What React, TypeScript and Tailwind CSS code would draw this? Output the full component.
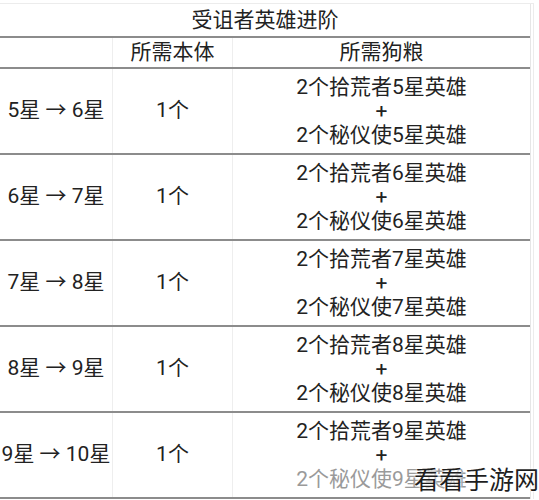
import React from 'react';

interface Row {
  from: number;
  to: number;
}

const rows: Row[] = [
  { from: 5, to: 6 },
  { from: 6, to: 7 },
  { from: 7, to: 8 },
  { from: 8, to: 9 },
  { from: 9, to: 10 },
];

const font = { fontFamily: '"Roboto", "Noto Sans CJK SC", sans-serif' };

const App: React.FC = () => {
  return (
    <div className="relative w-[539px] h-[500px] overflow-hidden bg-white text-[#222] text-[21px]" style={font}>
      <div className="mt-[3px] w-[534px] border-t border-r border-[#ececec]">
        <div className="w-[531px] border-r border-[#e6e6e6]">
          {/* title */}
          <div className="h-[34px] flex items-center justify-center border-b-2 border-[#8c8c8c] leading-none">
            受诅者英雄进阶
          </div>
          {/* header */}
          <div className="grid grid-cols-[113px_120px_1fr] h-[31px] border-b-2 border-[#8c8c8c] leading-none">
            <div className="border-r border-[#eeeeee]" />
            <div className="flex items-center justify-center border-r border-[#eeeeee]">所需本体</div>
            <div className="flex items-center justify-center">所需狗粮</div>
          </div>
          {rows.map((r, i) => {
            const last = i === rows.length - 1;
            return (
              <div
                key={r.from}
                className="grid grid-cols-[113px_120px_1fr] h-[86px] border-b-2 border-[#8c8c8c]"
              >
                <div className="flex items-center justify-center whitespace-nowrap border-r border-[#eeeeee]">
                  {r.from}星 → {r.to}星
                </div>
                <div className="flex items-center justify-center border-r border-[#eeeeee]">1个</div>
                <div className="flex flex-col items-center justify-center leading-[24px] whitespace-nowrap">
                  <span>2个拾荒者{r.from}星英雄</span>
                  <span>+</span>
                  <span className={last ? 'text-[#9a9a9a]' : ''}>2个秘仪使{r.from}星英雄</span>
                </div>
              </div>
            );
          })}
        </div>
      </div>
      <div className="absolute left-[414px] top-[468px] text-[25px] leading-none text-[#1e1e1e] whitespace-nowrap [text-shadow:0_0_2px_#fff,0_0_3px_#fff]">
        看看手游网
      </div>
    </div>
  );
};

export default App;
